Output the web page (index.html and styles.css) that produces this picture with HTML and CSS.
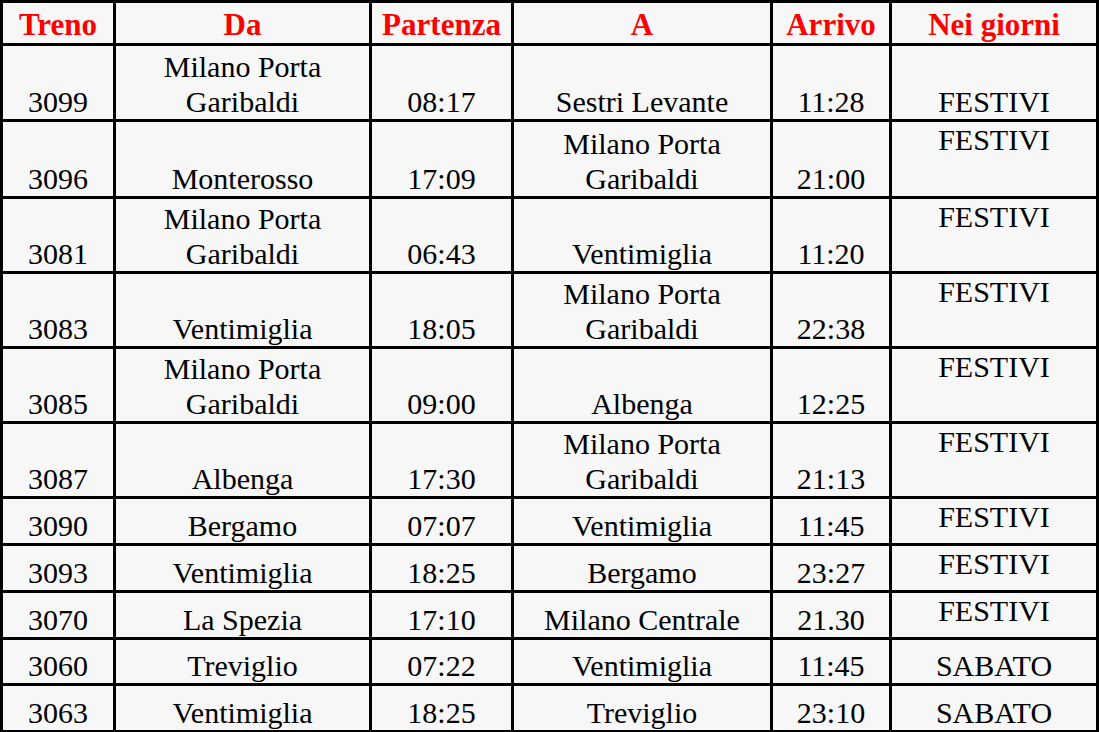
FILE: index.html
```html
<!DOCTYPE html>
<html lang="it">
<head>
<meta charset="utf-8">
<title>Orari treni</title>
<link rel="stylesheet" href="styles.css">
</head>
<body>
<table class="orari">
  <colgroup>
    <col class="c-treno">
    <col class="c-da">
    <col class="c-partenza">
    <col class="c-a">
    <col class="c-arrivo">
    <col class="c-giorni">
  </colgroup>
  <thead>
    <tr class="head">
      <th>Treno</th><th>Da</th><th>Partenza</th><th>A</th><th>Arrivo</th><th>Nei giorni</th>
    </tr>
  </thead>
  <tbody>
    <tr class="r1">
      <td>3099</td><td>Milano Porta<br>Garibaldi</td><td>08:17</td><td>Sestri Levante</td><td>11:28</td><td>FESTIVI</td>
    </tr>
    <tr class="r2">
      <td>3096</td><td>Monterosso</td><td>17:09</td><td>Milano Porta<br>Garibaldi</td><td>21:00</td><td class="top">FESTIVI</td>
    </tr>
    <tr class="r3">
      <td>3081</td><td>Milano Porta<br>Garibaldi</td><td>06:43</td><td>Ventimiglia</td><td>11:20</td><td class="top">FESTIVI</td>
    </tr>
    <tr class="r3">
      <td>3083</td><td>Ventimiglia</td><td>18:05</td><td>Milano Porta<br>Garibaldi</td><td>22:38</td><td class="top">FESTIVI</td>
    </tr>
    <tr class="r3">
      <td>3085</td><td>Milano Porta<br>Garibaldi</td><td>09:00</td><td>Albenga</td><td>12:25</td><td class="top">FESTIVI</td>
    </tr>
    <tr class="r3">
      <td>3087</td><td>Albenga</td><td>17:30</td><td>Milano Porta<br>Garibaldi</td><td>21:13</td><td class="top">FESTIVI</td>
    </tr>
    <tr class="r4">
      <td>3090</td><td>Bergamo</td><td>07:07</td><td>Ventimiglia</td><td>11:45</td><td class="top">FESTIVI</td>
    </tr>
    <tr class="r4">
      <td>3093</td><td>Ventimiglia</td><td>18:25</td><td>Bergamo</td><td>23:27</td><td class="top">FESTIVI</td>
    </tr>
    <tr class="r4">
      <td>3070</td><td>La Spezia</td><td>17:10</td><td>Milano Centrale</td><td>21.30</td><td class="top">FESTIVI</td>
    </tr>
    <tr class="r5">
      <td>3060</td><td>Treviglio</td><td>07:22</td><td>Ventimiglia</td><td>11:45</td><td>SABATO</td>
    </tr>
    <tr class="r4">
      <td>3063</td><td>Ventimiglia</td><td>18:25</td><td>Treviglio</td><td>23:10</td><td>SABATO</td>
    </tr>
  </tbody>
</table>
</body>
</html>
```

FILE: styles.css
```css
html, body {
  margin: 0;
  padding: 0;
  background: #f7f7f7;
  overflow: hidden;
}

.orari {
  box-sizing: border-box;
  width: 1099px;
  table-layout: fixed;
  border-collapse: separate;
  border-spacing: 0;
  border-top: 3px solid #000;
  border-left: 3px solid #000;
  background: #f7f7f7;
  font-family: "Liberation Serif", "Times New Roman", serif;
  color: #000;
}

.c-treno { width: 113px; }
.c-da { width: 256px; }
.c-partenza { width: 142px; }
.c-a { width: 259px; }
.c-arrivo { width: 119px; }
.c-giorni { width: 207px; }

.orari th,
.orari td {
  padding: 0;
  border-right: 3px solid #000;
  border-bottom: 3px solid #000;
  text-align: center;
  vertical-align: bottom;
  overflow: hidden;
  white-space: nowrap;
}

.orari th {
  color: #ff0000;
  font-weight: bold;
  font-size: 31px;
  line-height: 36px;
}

.orari td {
  font-size: 30px;
  line-height: 35px;
  font-weight: normal;
}

.orari td.top {
  vertical-align: top;
}

.head { height: 43px; }
.r1 { height: 76px; }
.r2 { height: 77px; }
.r3 { height: 75px; }
.r4 { height: 47px; }
.r5 { height: 46px; }
```
